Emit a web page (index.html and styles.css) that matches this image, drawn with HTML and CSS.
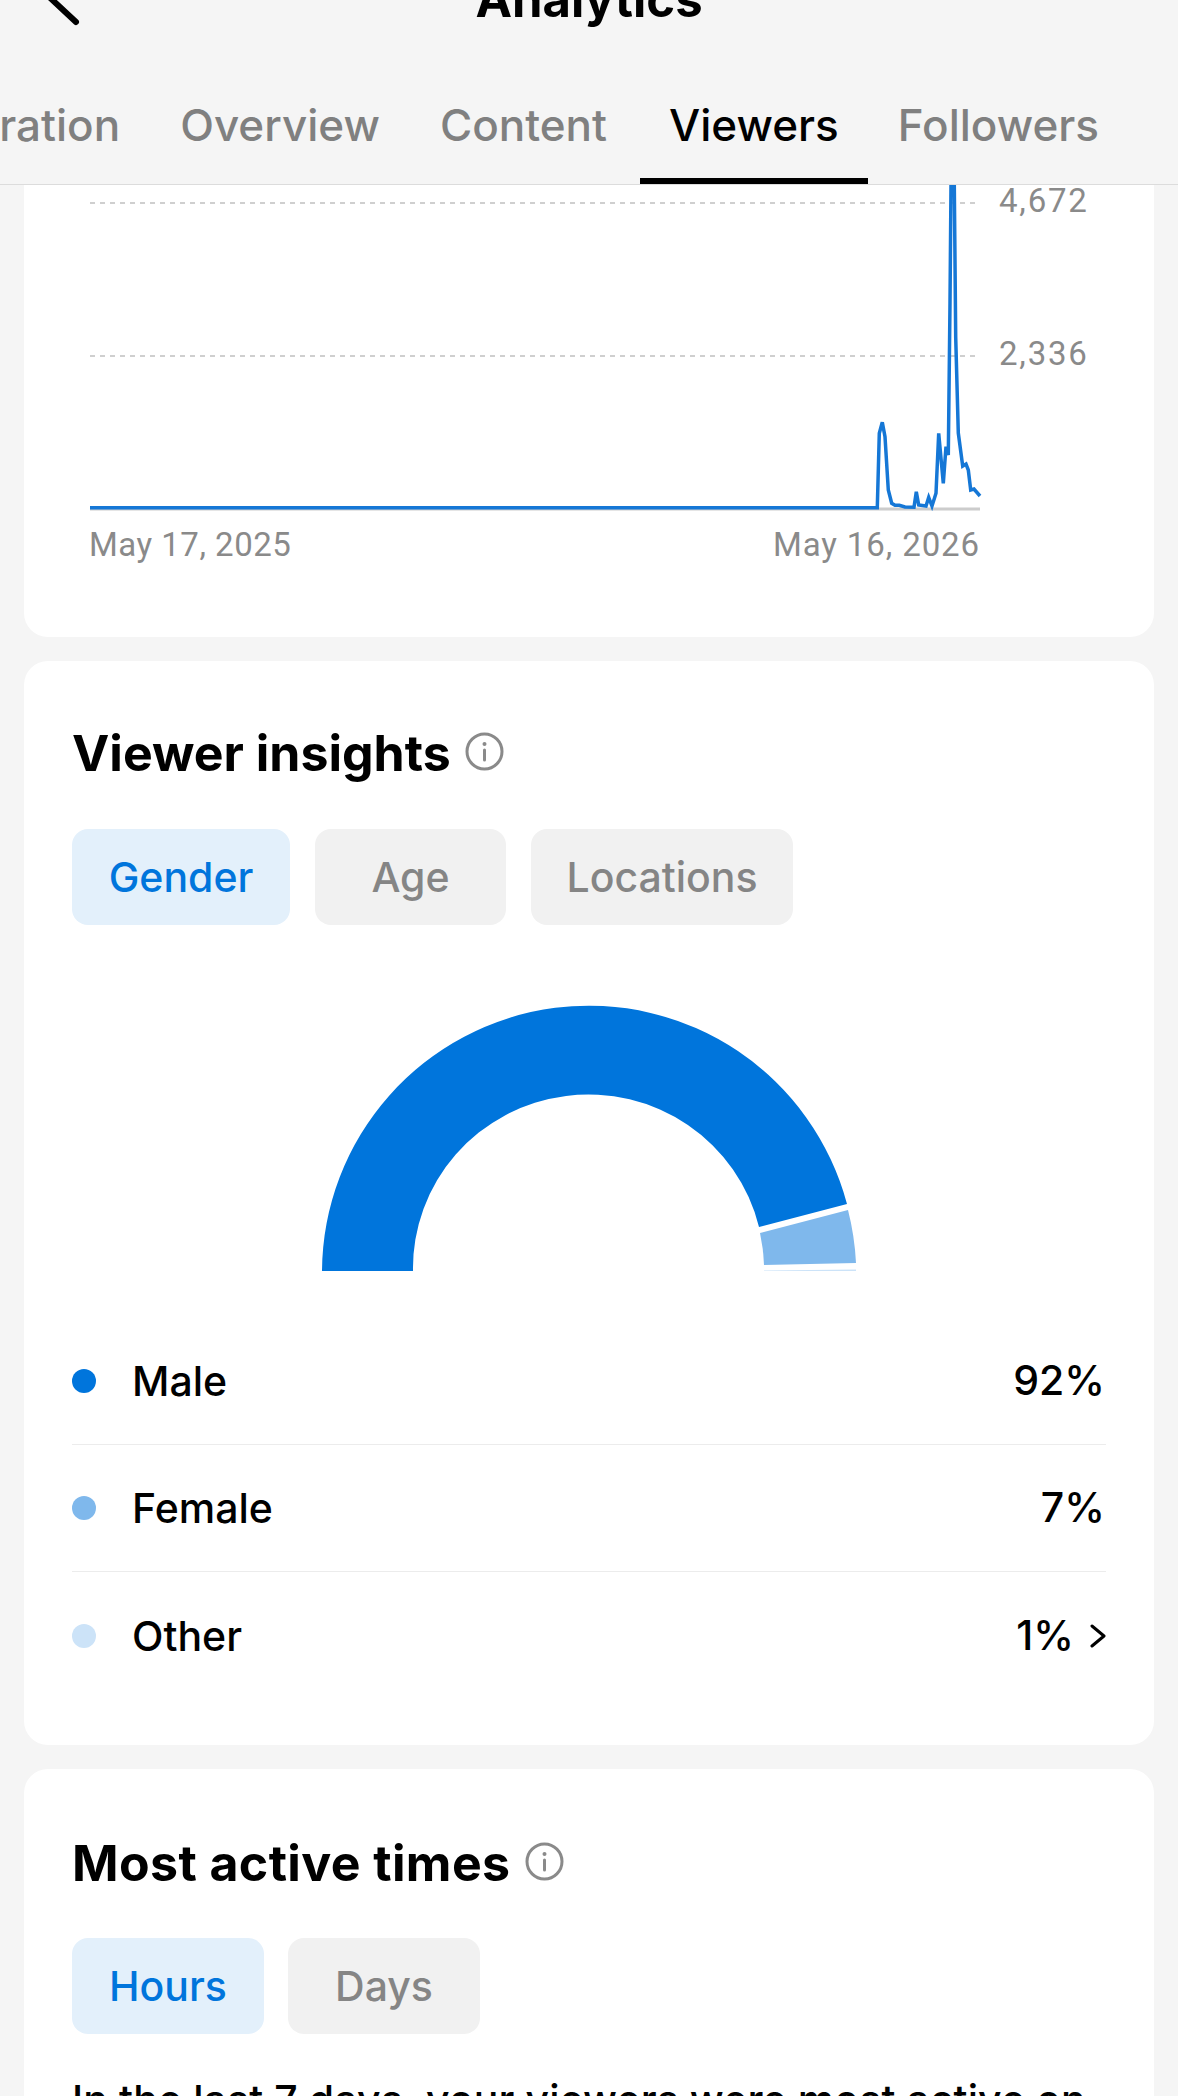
FILE: index.html
```html
<!DOCTYPE html>
<html lang="en">
<head>
    <meta charset="UTF-8">
    <meta name="viewport" content="width=device-width, initial-scale=1.0">
    <title>Analytics</title>
    <link rel="stylesheet" href="styles.css">
</head>
<body>
    <header class="top-bar">
        <div class="title-row">
            <svg class="back-icon" width="40" height="40" viewBox="0 0 40 40"><path d="M6 -6 L36 22" fill="none" stroke="#000" stroke-width="6" stroke-linecap="round"/></svg>
            <h1 class="page-title">Analytics</h1>
        </div>
        <nav class="tabs">
            <span class="tab">Duration</span>
            <span class="tab">Overview</span>
            <span class="tab">Content</span>
            <span class="tab tab-active">Viewers</span>
            <span class="tab">Followers</span>
        </nav>
    </header>

    <section class="card card-chart">
        <svg class="line-chart" width="1130" height="336" viewBox="24 185 1130 336">
            <line class="grid-line" x1="90" y1="203" x2="980" y2="203"/>
            <line class="grid-line" x1="90" y1="356" x2="980" y2="356"/>
            <line class="base-line" x1="90" y1="509" x2="980" y2="509"/>
            <text class="axis-label" x="999" y="212">4,672</text>
            <text class="axis-label" x="999" y="365">2,336</text>
            <path class="plot-line" d="M90 507.7 L877.3 507.7 L879.3 433.3 L882.3 422.3 L885 436.7 L888.3 490 L891.7 503.3 L895 505.3 L899.3 505.3 L905 507 L914 507.3 L916.3 491.7 L918.7 505 L926 506 L928.7 497.3 L932 506 L936 493.3 L938.7 433.3 L943.3 483.3 L946 446.7 L948.3 455 L950 303 L951 185 M954.3 185 L955.7 337 L958.3 433 L962.7 466 L966 464 L968.3 470 L970.7 490 L974 489 L980 496"/>
            <path class="plot-line" d="M951 185 L954.3 185"/>
        </svg>
        <div class="date-row">
            <span class="date-start">May 17, 2025</span>
            <span>May 16, 2026</span>
        </div>
    </section>

    <section class="card card-insights">
        <h2 class="card-title">Viewer insights
            <svg class="info-icon" width="39" height="39" viewBox="0 0 39 39"><circle cx="19.5" cy="19.5" r="17.5" fill="none" stroke="#8a8a8a" stroke-width="3"/><circle cx="19.5" cy="12" r="2" fill="#8a8a8a"/><path d="M19.5 18 V28" stroke="#8a8a8a" stroke-width="3" stroke-linecap="round"/></svg>
        </h2>
        <div class="pills">
            <span class="pill pill-active gender">Gender</span>
            <span class="pill age">Age</span>
            <span class="pill locations">Locations</span>
        </div>
        <svg class="gauge" width="534" height="270" viewBox="322 1001 534 270">
            <path fill="#0075dc" d="M322 1270 A267 267 0 0 1 847 1203 L759 1226 A175.5 173.5 0 0 0 413 1270 Z"/>
            <path fill="#7fb8ec" d="M848 1209 A267 267 0 0 1 856 1262 L764 1264 A176 176 0 0 0 760 1232 Z"/>
            <path fill="#cce3f8" d="M764 1269.5 L856 1268.5 L856 1270 L764 1270 Z"/>
        </svg>
        <ul class="legend">
            <li class="legend-row"><i class="dot dot-male"></i><span class="legend-name">Male</span><span class="legend-value">92%</span></li>
            <li class="legend-row"><i class="dot dot-female"></i><span class="legend-name">Female</span><span class="legend-value">7%</span></li>
            <li class="legend-row"><i class="dot dot-other"></i><span class="legend-name">Other</span><span class="legend-value">1%</span>
                <svg class="chevron" width="16" height="24" viewBox="0 0 16 24"><path d="M2 2 L14 12 L2 22" fill="none" stroke="#000" stroke-width="3" stroke-linecap="round" stroke-linejoin="round"/></svg>
            </li>
        </ul>
    </section>

    <section class="card card-times">
        <h2 class="card-title">Most active times
            <svg class="info-icon" width="39" height="39" viewBox="0 0 39 39"><circle cx="19.5" cy="19.5" r="17.5" fill="none" stroke="#8a8a8a" stroke-width="3"/><circle cx="19.5" cy="12" r="2" fill="#8a8a8a"/><path d="M19.5 18 V28" stroke="#8a8a8a" stroke-width="3" stroke-linecap="round"/></svg>
        </h2>
        <div class="pills">
            <span class="pill pill-active hours">Hours</span>
            <span class="pill days">Days</span>
        </div>
        <p class="times-text">In the last 7 days, your viewers were most active on</p>
    </section>
</body>
</html>
```

FILE: styles.css
```css
html, body {
    margin: 0;
    height: 2096px;
    overflow: hidden;
}
body {
    font-family: Inter, "Liberation Sans", sans-serif;
    background-color: #f5f5f5;
    color: #000;
}
.top-bar {
    height: 184px;
    border-bottom: 1px solid #dcdcdc;
    overflow: hidden;
}
.title-row {
    position: relative;
    height: 60px;
    margin-top: -30px;
    text-align: center;
}
.back-icon {
    position: absolute;
    left: 40px;
    top: 30px;
}
.page-title {
    margin: 0;
    font-size: 49px;
    line-height: 60px;
    font-weight: 700;
}
.tabs {
    display: flex;
    justify-content: flex-end;
    margin-top: 64px;
    margin-right: 49px;
}
.tab {
    flex: none;
    padding: 0 30px;
    height: 90px;
    box-sizing: border-box;
    font-size: 44px;
    line-height: 62px;
    font-weight: 500;
    color: #808080;
}
.tab-active {
    padding: 0 29px;
    margin-left: 3px;
    color: #000;
    border-bottom: 6px solid #000;
}
.card {
    margin: 24px 24px 0;
    padding: 0 48px;
    background-color: #fff;
    border-radius: 24px;
}
.card-chart {
    margin-top: 0;
    height: 452px;
    padding: 0;
    border-radius: 0 0 24px 24px;
}
.line-chart {
    display: block;
}
.grid-line {
    stroke: #cfcfcf;
    stroke-width: 2;
    stroke-dasharray: 5 5;
}
.base-line {
    stroke: #cccccc;
    stroke-width: 3;
}
.plot-line {
    fill: none;
    stroke: #1577d6;
    stroke-width: 3.5;
}
.axis-label {
    font-family: Roboto, sans-serif;
    font-size: 33px;
    letter-spacing: 1.8px;
    fill: #8a8a8a;
}
.date-row {
    display: flex;
    justify-content: space-between;
    width: 891px;
    margin-left: 65px;
    padding-top: 3px;
    font-family: Roboto, sans-serif;
    font-size: 33px;
    letter-spacing: 0.9px;
    line-height: 42px;
    color: #8a8a8a;
}
.date-start {
    letter-spacing: 0.5px;
}
.card-insights {
    height: 1084px;
    padding-top: 62px;
    box-sizing: border-box;
}
.card-times {
    padding-top: 64px;
    height: 400px;
    box-sizing: border-box;
}
.card-title {
    display: flex;
    align-items: center;
    gap: 14px;
    margin: 0;
    font-size: 50px;
    line-height: 60px;
    font-weight: 700;
}
.card-times .card-title {
    letter-spacing: 0.4px;
}
.info-icon {
    margin-top: -3px;
}
.pills {
    display: flex;
    gap: 25px;
    margin-top: 46px;
}
.card-times .pills {
    gap: 24px;
    margin-top: 45px;
}
.pill {
    display: block;
    height: 96px;
    border-radius: 16px;
    background-color: #f1f1f1;
    color: #858585;
    font-size: 41px;
    line-height: 96px;
    font-weight: 500;
    text-align: center;
}
.pill-active {
    background-color: #e3f0fb;
    color: #0075dc;
}
.gender { width: 218px; }
.age { width: 191px; }
.locations { width: 262px; }
.hours { width: 192px; }
.days { width: 192px; }
.gauge {
    display: block;
    margin: 77px auto 0;
}
.legend {
    list-style: none;
    margin: 46px 0 0;
    padding: 0;
}
.legend-row {
    display: flex;
    align-items: center;
    height: 127px;
    border-bottom: 1px solid #ececec;
    box-sizing: border-box;
    font-size: 41px;
    font-weight: 500;
}
.legend-row:last-child {
    border-bottom: none;
}
.dot {
    width: 24px;
    height: 24px;
    border-radius: 50%;
    margin-right: 36px;
}
.dot-male { background-color: #0075dc; }
.dot-female { background-color: #7fb8ec; }
.dot-other { background-color: #cce3f8; }
.legend-name {
    flex: 1;
}
.legend-value {
    margin-right: 1px;
    position: relative;
    top: -1px;
}
.chevron {
    margin-left: 15px;
}
.times-text {
    margin: 38px 0 0;
    font-size: 41px;
    letter-spacing: 0.1px;
    line-height: 56px;
    font-weight: 500;
    white-space: nowrap;
}
```
